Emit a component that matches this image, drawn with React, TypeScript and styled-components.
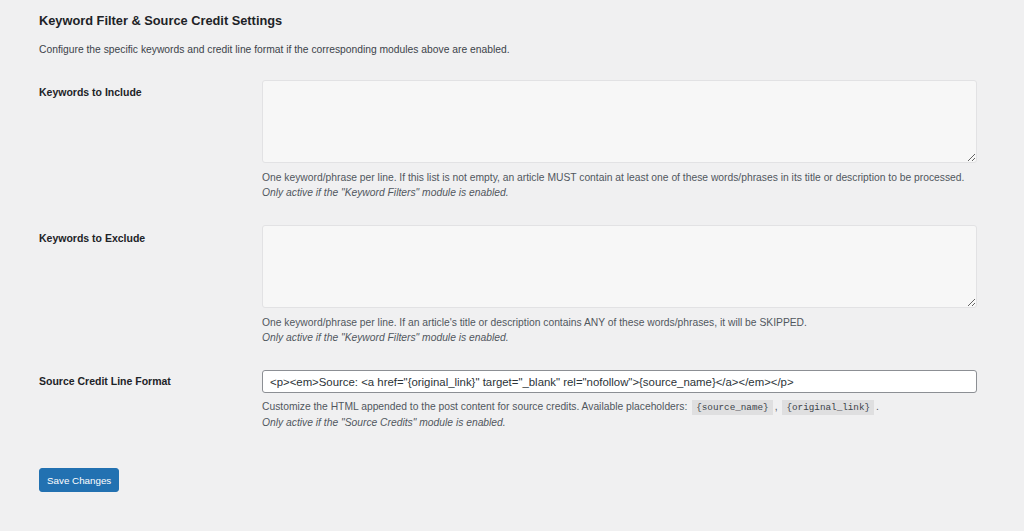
import styled, { createGlobalStyle } from "styled-components";

const GlobalStyle = createGlobalStyle`
  html, body {
    margin: 0;
    padding: 0;
    background: #f0f0f1;
    color: #1d2327;
    font-family: "Liberation Sans", Arial, sans-serif;
    font-size: 11px;
  }
  * {
    box-sizing: border-box;
  }
`;

const Wrap = styled.div`
  padding: 12px 47px 40px 39px;
`;

const Title = styled.h2`
  margin: 0;
  font-size: 12.8px;
  font-weight: 600;
  line-height: 18px;
  color: #1d2327;
`;

const Intro = styled.p`
  margin: 13px 0 0;
  font-size: 10.3px;
  line-height: 14px;
  color: #3c434a;
`;

const FormTable = styled.div`
  margin-top: 23px;
  display: flex;
  flex-direction: column;
  gap: 25px;
`;

const Row = styled.div<{ $shift?: number }>`
  display: grid;
  grid-template-columns: 223px 1fr;
  margin-top: ${(p) => p.$shift ?? 0}px;
`;

const Label = styled.label<{ $top: number }>`
  padding-top: ${(p) => p.$top}px;
  font-size: 10.5px;
  font-weight: 700;
  line-height: 14px;
  color: #1d2327;
`;

const Field = styled.div`
  display: flex;
  flex-direction: column;
`;

const Area = styled.textarea`
  width: 100%;
  height: 83px;
  margin: 0;
  padding: 4px 6px;
  border: 1px solid #e2e2e4;
  border-radius: 3px;
  background: #f7f7f7;
  font-family: inherit;
  font-size: 10.5px;
  resize: vertical;
  outline: none;
`;

const Input = styled.input`
  width: 100%;
  height: 23px;
  margin: 0;
  padding: 0 7px;
  border: 1px solid #8c8f94;
  border-radius: 3px;
  background: #fff;
  color: #2c3338;
  font-family: inherit;
  font-size: 11.4px;
  outline: none;
`;

const Help = styled.p<{ $italic?: boolean; $gap?: number }>`
  margin: ${(p) => (p.$italic ? 1 : p.$gap ?? 8)}px 0 0;
  font-size: 10.3px;
  line-height: 14px;
  color: #50575e;
  font-style: ${(p) => (p.$italic ? "italic" : "normal")};
  white-space: nowrap;
`;

const Code = styled.code`
  display: inline-block;
  margin: 0 2px;
  padding: 1px 4px;
  background: rgba(0, 0, 0, 0.07);
  font-family: "Liberation Mono", "DejaVu Sans Mono", monospace;
  font-size: 9.3px;
  line-height: 13px;
  color: #3c434a;
`;

const Actions = styled.div`
  margin-top: 38px;
`;

const Button = styled.button`
  height: 24px;
  padding: 0 7px;
  border: 1px solid #2271b1;
  border-radius: 3px;
  background: #2271b1;
  color: #fff;
  font-family: inherit;
  font-size: 9.8px;
  cursor: pointer;
`;

const credit =
  '<p><em>Source: <a href="{original_link}" target="_blank" rel="nofollow">{source_name}</a></em></p>';

export default function App() {
  return (
    <>
      <GlobalStyle />
      <Wrap>
        <Title>Keyword Filter &amp; Source Credit Settings</Title>
        <Intro>
          Configure the specific keywords and credit line format if the corresponding modules above are enabled.
        </Intro>
        <FormTable>
          <Row>
            <Label $top={5}>Keywords to Include</Label>
            <Field>
              <Area />
              <Help>
                One keyword/phrase per line. If this list is not empty, an article MUST contain at least one of these
                words/phrases in its title or description to be processed.
              </Help>
              <Help $italic>Only active if the "Keyword Filters" module is enabled.</Help>
            </Field>
          </Row>
          <Row>
            <Label $top={6}>Keywords to Exclude</Label>
            <Field>
              <Area />
              <Help>
                One keyword/phrase per line. If an article's title or description contains ANY of these words/phrases,
                it will be SKIPPED.
              </Help>
              <Help $italic>Only active if the "Keyword Filters" module is enabled.</Help>
            </Field>
          </Row>
          <Row>
            <Label $top={4}>Source Credit Line Format</Label>
            <Field>
              <Input defaultValue={credit} />
              <Help $gap={7}>
                Customize the HTML appended to the post content for source credits. Available placeholders:{" "}
                <Code>{"{source_name}"}</Code>, <Code>{"{original_link}"}</Code>.
              </Help>
              <Help $italic>Only active if the "Source Credits" module is enabled.</Help>
            </Field>
          </Row>
        </FormTable>
        <Actions>
          <Button>Save Changes</Button>
        </Actions>
      </Wrap>
    </>
  );
}
